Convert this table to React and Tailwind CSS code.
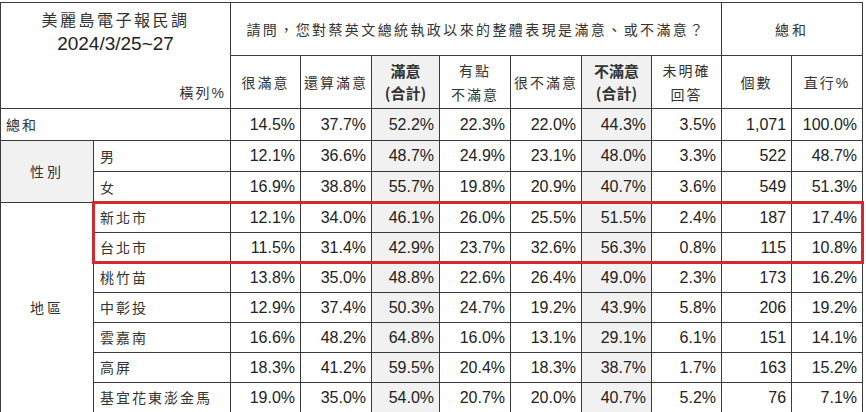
import React from 'react'

const cjk = "font-['Noto_Sans_CJK_TC','Noto_Sans_CJK_SC',sans-serif]"
const num = "font-['Liberation_Sans',Arial,sans-serif]"
const line = 'border border-[#3a3a3a]'

const cols = [93, 137, 70, 71, 68, 71, 71, 70, 70, 70, 71]

// 每列數據：很滿意, 還算滿意, 滿意合計, 有點不滿意, 很不滿意, 不滿意合計, 未明確回答, 個數, 直行%
const rows = [
  { label: '男', group: '性別', span: 2, v: ['12.1%', '36.6%', '48.7%', '24.9%', '23.1%', '48.0%', '3.3%', '522', '48.7%'] },
  { label: '女', v: ['16.9%', '38.8%', '55.7%', '19.8%', '20.9%', '40.7%', '3.6%', '549', '51.3%'] },
  { label: '新北市', group: '地區', span: 7, v: ['12.1%', '34.0%', '46.1%', '26.0%', '25.5%', '51.5%', '2.4%', '187', '17.4%'] },
  { label: '台北市', v: ['11.5%', '31.4%', '42.9%', '23.7%', '32.6%', '56.3%', '0.8%', '115', '10.8%'] },
  { label: '桃竹苗', v: ['13.8%', '35.0%', '48.8%', '22.6%', '26.4%', '49.0%', '2.3%', '173', '16.2%'] },
  { label: '中彰投', v: ['12.9%', '37.4%', '50.3%', '24.7%', '19.2%', '43.9%', '5.8%', '206', '19.2%'] },
  { label: '雲嘉南', v: ['16.6%', '48.2%', '64.8%', '16.0%', '13.1%', '29.1%', '6.1%', '151', '14.1%'] },
  { label: '高屏', v: ['18.3%', '41.2%', '59.5%', '20.4%', '18.3%', '38.7%', '1.7%', '163', '15.2%'] },
  { label: '基宜花東澎金馬', v: ['19.0%', '35.0%', '54.0%', '20.7%', '20.0%', '40.7%', '5.2%', '76', '7.1%'] },
]

const total = ['14.5%', '37.7%', '52.2%', '22.3%', '22.0%', '44.3%', '3.5%', '1,071', '100.0%']

function Val({ v, i }) {
  const shade = i === 2 || i === 5
  return (
    <td className={`${line} ${num} ${shade ? 'bg-[#f1f1f1]' : ''} pr-[5px] text-right align-middle text-[16px] text-[#222]`}>
      {v}
    </td>
  )
}

function Head({ children, shade, bold }) {
  return (
    <td
      className={`${line} ${shade ? 'bg-[#f1f1f1]' : ''} ${bold ? 'font-bold text-[15px] leading-[22px]' : 'text-[14px] leading-[24px] tracking-[2px]'} ${cjk} text-center align-middle text-[#333]`}
    >
      {children}
    </td>
  )
}

export default function App() {
  return (
    <div className="relative h-[412px] w-[866px] overflow-hidden bg-white pt-[2px]">
      <table className="table-fixed border-collapse" style={{ width: 862 }}>
        <colgroup>
          {cols.map((w, i) => (
            <col key={i} style={{ width: w }} />
          ))}
        </colgroup>
        <tbody>
          <tr className="h-[53px]">
            <td colSpan={2} rowSpan={2} className={`${line} relative align-top`}>
              <div className={`${cjk} mt-[4px] text-center text-[16px] leading-[24px] tracking-[2.5px] text-[#333]`}>美麗島電子報民調</div>
              <div className={`${num} text-center text-[19px] leading-[25px] text-[#222]`}>2024/3/25~27</div>
              <div className={`${cjk} absolute right-[4px] bottom-[4px] text-[14px] tracking-[2px] text-[#333]`}>
                橫列<span className={num}>%</span>
              </div>
            </td>
            <td colSpan={7} className={`${line} ${cjk} text-center align-middle text-[14px] tracking-[2.4px] text-[#333]`}>
              請問，您對蔡英文總統執政以來的整體表現是滿意、或不滿意？
            </td>
            <td colSpan={2} className={`${line} ${cjk} text-center align-middle text-[14px] tracking-[3px] text-[#333]`}>
              總和
            </td>
          </tr>
          <tr className="h-[53px]">
            <Head>很滿意</Head>
            <Head>還算滿意</Head>
            <Head shade bold>
              滿意
              <br />
              (合計)
            </Head>
            <Head>
              有點
              <br />
              不滿意
            </Head>
            <Head>很不滿意</Head>
            <Head shade bold>
              不滿意
              <br />
              (合計)
            </Head>
            <Head>
              未明確
              <br />
              回答
            </Head>
            <Head>個數</Head>
            <Head>
              直行<span className={num}>%</span>
            </Head>
          </tr>
          <tr className="h-[32px]">
            <td colSpan={2} className={`${line} ${cjk} pl-[5px] text-left align-middle text-[14px] tracking-[2px] text-[#333]`}>
              總和
            </td>
            {total.map((v, i) => (
              <Val key={i} v={v} i={i} />
            ))}
          </tr>
          {rows.map((r, ri) => (
            <tr key={r.label} className={ri < 2 ? 'h-[31px]' : 'h-[30px]'}>
              {r.group && (
                <td
                  rowSpan={r.span}
                  className={`${line} ${cjk} ${r.group === '性別' ? 'bg-[#f1f1f1]' : ''} text-center align-middle text-[14px] tracking-[3px] text-[#333]`}
                >
                  {r.group}
                </td>
              )}
              <td className={`${line} ${cjk} pl-[6px] text-left align-middle text-[14px] tracking-[2px] text-[#333]`}>{r.label}</td>
              {r.v.map((v, i) => (
                <Val key={i} v={v} i={i} />
              ))}
            </tr>
          ))}
        </tbody>
      </table>
      {/* 紅框標示新北市、台北市 */}
      <div className="pointer-events-none absolute left-[92px] top-[201px] h-[63px] w-[772px] border-[3px] border-[#d42a2f]" />
    </div>
  )
}
